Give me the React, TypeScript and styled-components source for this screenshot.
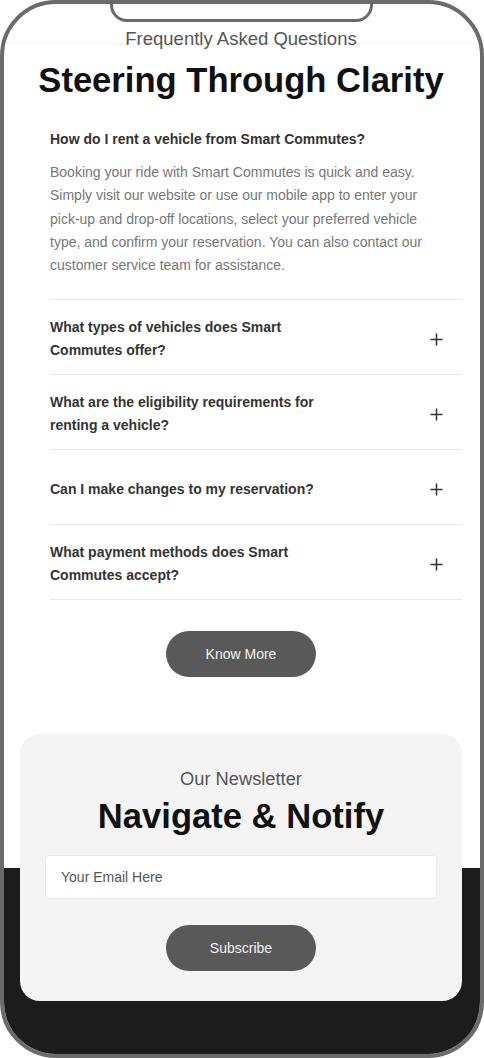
import React from 'react';
import styled, { createGlobalStyle } from 'styled-components';

const GlobalStyle = createGlobalStyle`
  html, body {
    margin: 0;
    padding: 0;
    background: #ffffff;
  }
  * {
    box-sizing: border-box;
  }
`;

const Phone = styled.div`
  position: relative;
  width: 484px;
  height: 1058px;
  border: 4px solid #6b6b6b;
  border-radius: 56px;
  overflow: hidden;
  background: #ffffff;
  display: flex;
  flex-direction: column;
  font-family: 'Liberation Sans', Arial, sans-serif;
`;

const Notch = styled.div`
  position: absolute;
  top: -12px;
  left: 106px;
  width: 263px;
  height: 30px;
  border: 3px solid #6b6b6b;
  border-radius: 0 0 17px 17px;
  background: #ffffff;
  z-index: 2;
`;

const TopBar = styled.div`
  height: 40px;
  border-bottom: 1px solid #f3f3f3;
  flex-shrink: 0;
`;

const Container = styled.div`
  margin: 0 18px 0 16px;
  display: flex;
  flex-direction: column;
  align-items: center;
`;

const Overline = styled.p`
  margin: -16px 0 0;
  font-size: 18.5px;
  line-height: 22px;
  color: #555555;
  text-align: center;
  position: relative;
`;

const Title = styled.h1`
  margin: 10px 0 0;
  font-size: 34.6px;
  line-height: 40px;
  font-weight: 700;
  color: #111111;
  text-align: center;
`;

const FaqList = styled.div`
  align-self: stretch;
  margin: 14px 0 0 30px;
`;

const FaqItem = styled.div<{ $open?: boolean }>`
  padding: ${p => (p.$open ? '14px 20px 22px 0' : '16px 19px 12px 0')};
  border-bottom: 1px solid #e8e8e8;
`;

const QuestionRow = styled.div`
  display: flex;
  align-items: center;
  justify-content: space-between;
  min-height: 46px;
`;

const Question = styled.h3<{ $wide?: boolean }>`
  margin: 0;
  max-width: ${p => (p.$wide ? 'none' : '280px')};
  font-size: 14px;
  line-height: 23px;
  font-weight: 700;
  color: #333333;
`;

const Answer = styled.p`
  margin: 10px 0 0;
  font-size: 14px;
  line-height: 23.3px;
  color: #777777;
`;

const PlusIcon = styled.svg`
  width: 13px;
  height: 13px;
  flex-shrink: 0;
`;

const PillButton = styled.button`
  width: 150px;
  height: 46px;
  border: none;
  border-radius: 23px;
  background: #595959;
  color: #f2f2f2;
  font-family: 'Liberation Sans', Arial, sans-serif;
  font-size: 14px;
  cursor: pointer;
`;

const KnowMoreButton = styled(PillButton)`
  margin-top: 31px;
`;

const NewsletterSection = styled.section`
  flex: 1;
  margin-top: 57px;
  padding: 0 18px 0 16px;
  background: linear-gradient(to bottom, #ffffff 134px, #1c1c1c 134px);
`;

const NewsletterCard = styled.div`
  background: #f4f4f4;
  border-radius: 20px;
  padding: 34px 25px 30px;
  display: flex;
  flex-direction: column;
  align-items: center;
`;

const CardOverline = styled.p`
  margin: 0;
  font-size: 18.3px;
  line-height: 22px;
  color: #555555;
`;

const CardTitle = styled.h2`
  margin: 6px 0 0;
  font-size: 34.6px;
  line-height: 40px;
  font-weight: 700;
  color: #111111;
`;

const EmailInput = styled.input`
  align-self: stretch;
  margin-top: 19px;
  height: 44px;
  padding: 0 15px;
  border: 1px solid #ebebeb;
  border-radius: 4px;
  background: #ffffff;
  font-family: 'Liberation Sans', Arial, sans-serif;
  font-size: 14px;
  color: #333333;
  outline: none;

  &::placeholder {
    color: #555555;
  }
`;

const SubscribeButton = styled(PillButton)`
  margin-top: 26px;
`;

const Plus: React.FC = () => (
  <PlusIcon viewBox="0 0 13 13" aria-hidden="true">
    <path d="M6.5 0.5v12M0.5 6.5h12" stroke="#333333" strokeWidth="1.5" fill="none" />
  </PlusIcon>
);

const questions = [
  'What types of vehicles does Smart Commutes offer?',
  'What are the eligibility requirements for renting a vehicle?',
  'Can I make changes to my reservation?',
  'What payment methods does Smart Commutes accept?',
];

const App: React.FC = () => {
  return (
    <>
      <GlobalStyle />
      <Phone>
        <Notch />
        <TopBar />
        <Container>
          <Overline>Frequently Asked Questions</Overline>
          <Title>Steering Through Clarity</Title>
          <FaqList>
            <FaqItem $open>
              <Question $wide>How do I rent a vehicle from Smart Commutes?</Question>
              <Answer>
                Booking your ride with Smart Commutes is quick and easy. Simply visit our website or use
                our mobile app to enter your pick-up and drop-off locations, select your preferred vehicle
                type, and confirm your reservation. You can also contact our customer service team for
                assistance.
              </Answer>
            </FaqItem>
            {questions.map(q => (
              <FaqItem key={q}>
                <QuestionRow>
                  <Question>{q}</Question>
                  <Plus />
                </QuestionRow>
              </FaqItem>
            ))}
          </FaqList>
          <KnowMoreButton>Know More</KnowMoreButton>
        </Container>
        <NewsletterSection>
          <NewsletterCard>
            <CardOverline>Our Newsletter</CardOverline>
            <CardTitle>Navigate &amp; Notify</CardTitle>
            <EmailInput type="email" placeholder="Your Email Here" />
            <SubscribeButton>Subscribe</SubscribeButton>
          </NewsletterCard>
        </NewsletterSection>
      </Phone>
    </>
  );
};

export default App;
